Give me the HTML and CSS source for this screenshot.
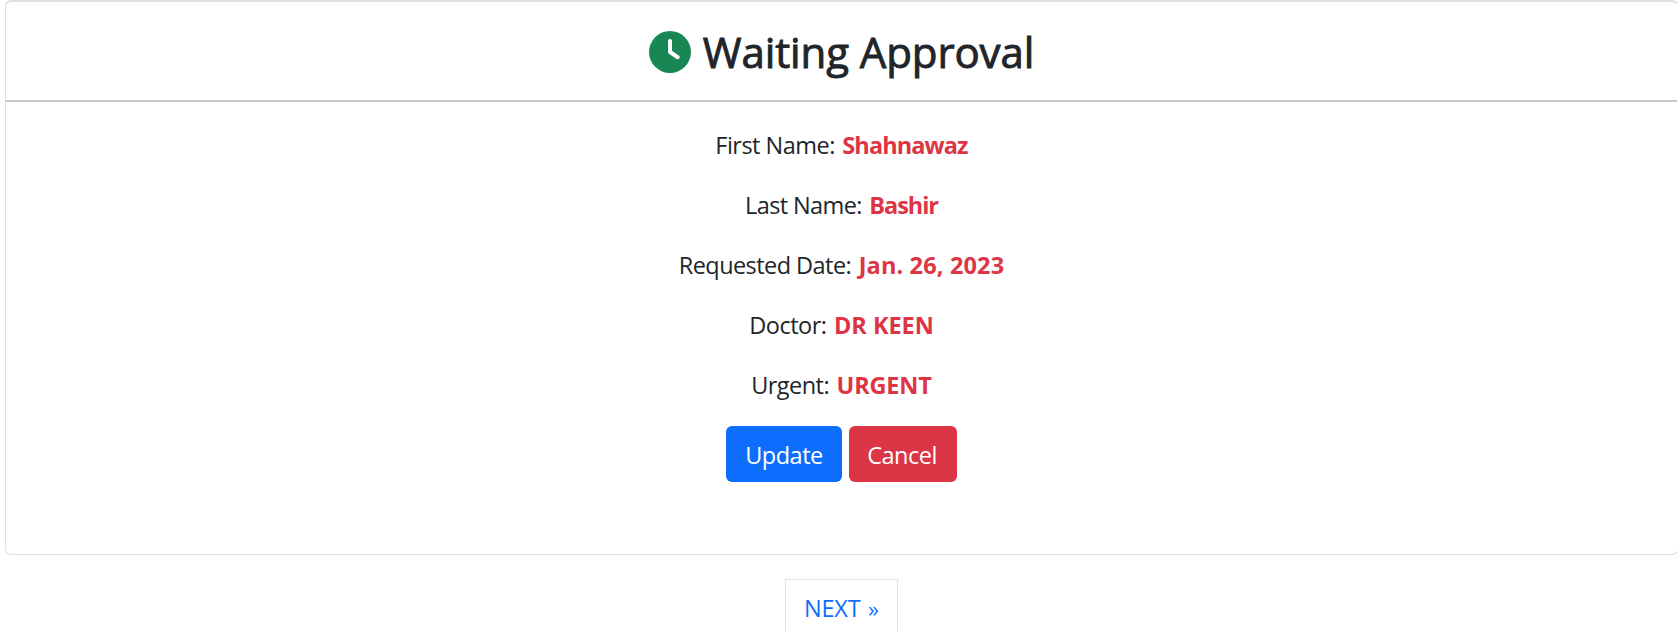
FILE: index.html
```html
<!DOCTYPE html>
<html lang="en">
<head>
<meta charset="utf-8">
<title>Waiting Approval</title>
<link rel="stylesheet" href="styles.css">
</head>
<body>
<main class="card">
  <header class="card-header">
    <svg class="clock" viewBox="0 0 512 512" aria-hidden="true"><circle cx="256" cy="256" r="256" fill="currentColor"/><path d="M256 120V256L350 320" fill="none" stroke="#fff" stroke-width="48" stroke-linecap="round" stroke-linejoin="round"/></svg>
    <h1 class="title">Waiting Approval</h1>
  </header>
  <div class="details">
    <p class="row"><span class="label l-first">First Name:</span><strong class="value v-first">Shahnawaz</strong></p>
    <p class="row"><span class="label l-last">Last Name:</span><strong class="value v-last">Bashir</strong></p>
    <p class="row"><span class="label l-date">Requested Date:</span><strong class="value v-date">Jan. 26, 2023</strong></p>
    <p class="row"><span class="label l-doctor">Doctor:</span><strong class="value v-doctor">DR KEEN</strong></p>
    <p class="row"><span class="label l-urgent">Urgent:</span><strong class="value v-urgent">URGENT</strong></p>
  </div>
  <div class="actions">
    <button class="btn update">Update</button>
    <button class="btn cancel">Cancel</button>
  </div>
</main>
<nav class="pagination"><a class="page-link" href="#"><span class="next">NEXT</span><span class="raquo">»</span></a></nav>
</body>
</html>
```
FILE: styles.css
```css
* { box-sizing: border-box; }
html { overflow: hidden; }
body { margin: 0; height: 631px; overflow: hidden; background: #fff; color: #212529; font: 23.5px/36px "Open Sans", "Noto Sans", sans-serif; }
.card { width: 1673px; height: 555px; margin-left: 5px; border: 1px solid #dfdfdf; border-top-width: 2px; border-radius: 6px; }
.card-header { display: flex; justify-content: center; height: 100px; padding-top: 29px; border-bottom: 2px solid #c8c8c8; }
.clock { width: 42px; height: 42px; margin-right: 12px; color: #198754; }
.title { margin: -4px 0 0; font-size: 42px; line-height: 50px; letter-spacing: -0.1px; font-weight: 500; -webkit-text-stroke: 0.9px #212529; white-space: nowrap; }
.details { padding-top: 25px; }
.row { display: flex; justify-content: center; gap: 7.5px; margin: 0 0 24px; white-space: nowrap; }
.value { color: #dc3545; font-weight: 700; }
.l-first { letter-spacing: -0.52px; }
.l-last { letter-spacing: -0.62px; }
.l-date { letter-spacing: -0.56px; }
.l-doctor { letter-spacing: -0.5px; }
.l-urgent { letter-spacing: -0.55px; }
.v-first { letter-spacing: -0.9px; }
.v-last { letter-spacing: -1.05px; }
.v-date { letter-spacing: 0.15px; }
.v-doctor { letter-spacing: -0.05px; }
.v-urgent { letter-spacing: -0.15px; }
.actions { display: flex; justify-content: center; gap: 7px; margin-top: -1px; }
.btn { height: 56px; padding: 2px 0 0; border: 0; border-radius: 6px; color: #fff; font: inherit; letter-spacing: -0.5px; }
.update { width: 116px; background: #0d6efd; }
.cancel { width: 108px; padding-right: 2px; background: #dc3545; }
.pagination { display: flex; justify-content: center; width: 1673px; margin-left: 5px; padding-top: 24px; }
.page-link { display: flex; width: 113px; height: 58px; padding: 10px 0 0 18px; border: 1px solid #dee2e6; color: #0d6efd; text-decoration: none; }
.next { letter-spacing: -0.2px; }
.raquo { margin-left: 7.5px; font-size: 22px; }
```
